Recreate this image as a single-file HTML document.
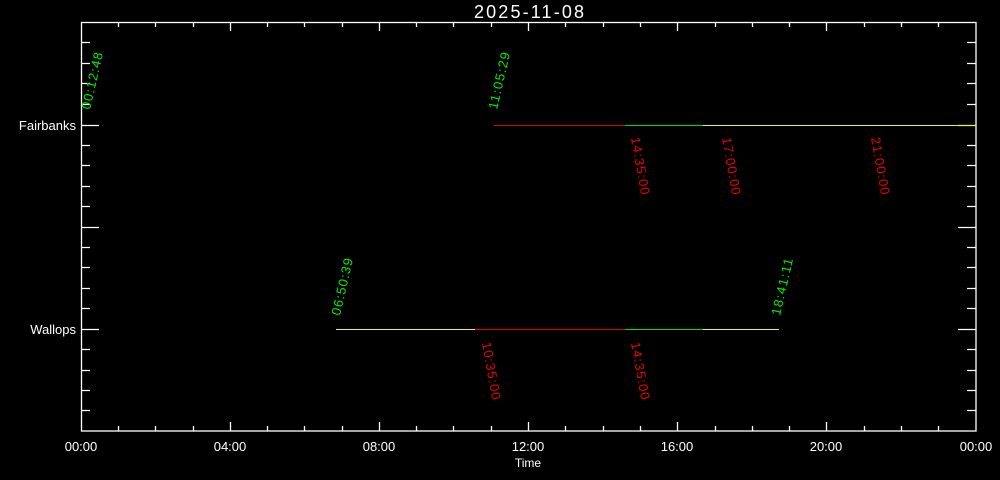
<!DOCTYPE html>
<html><head><meta charset="utf-8"><style>
html,body{margin:0;padding:0;background:#000;width:1000px;height:480px;overflow:hidden}
svg{display:block}
text{font-family:"Liberation Sans",sans-serif}
</style></head><body>
<svg width="1000" height="480" viewBox="0 0 1000 480" xmlns="http://www.w3.org/2000/svg">
<rect width="1000" height="480" fill="#000"/>
<g stroke="#fff" stroke-width="1.3" fill="none">
<rect x="81.5" y="22.5" width="894.5" height="408.5"/>
<path d="M118.5 431V426M155.5 431V426M193.5 431V426M267.5 431V426M304.5 431V426M342.5 431V426M416.5 431V426M453.5 431V426M491.5 431V426M565.5 431V426M603.5 431V426M640.5 431V426M715.5 431V426M752.5 431V426M789.5 431V426M864.5 431V426M901.5 431V426M938.5 431V426
M230.5 431V422M379.5 431V422M528.5 431V422M677.5 431V422M826.5 431V422
M118.5 22V27M155.5 22V27M193.5 22V27M267.5 22V27M304.5 22V27M342.5 22V27M416.5 22V27M453.5 22V27M491.5 22V27M565.5 22V27M603.5 22V27M640.5 22V27M715.5 22V27M752.5 22V27M789.5 22V27M864.5 22V27M901.5 22V27M938.5 22V27
M230.5 22V31M379.5 22V31M528.5 22V31M677.5 22V31M826.5 22V31"/>
<path d="M81 42.5H90M81 63.5H90M81 83.5H90M81 104.5H90M81 145.5H90M81 165.5H90M81 186.5H90M81 206.5H90M81 247.5H90M81 267.5H90M81 288.5H90M81 308.5H90M81 349.5H90M81 370.5H90M81 390.5H90M81 410.5H90
M81 125.5H99M81 227.5H99M81 329.5H99
M976 42.5H967M976 63.5H967M976 83.5H967M976 104.5H967M976 145.5H967M976 165.5H967M976 186.5H967M976 206.5H967M976 247.5H967M976 267.5H967M976 288.5H967M976 308.5H967M976 349.5H967M976 370.5H967M976 390.5H967M976 410.5H967
M976 125.5H958M976 227.5H958M976 329.5H958"/>
</g>
<g stroke-width="1">
<path d="M494 125.5H625" stroke="#d00"/>
<path d="M625 125.5H703" stroke="#0d0"/>
<path d="M703 125.5H976" stroke="#ee4"/>
<path d="M336 329.5H475" stroke="#ee4"/>
<path d="M475 329.5H625" stroke="#d00"/>
<path d="M625 329.5H703" stroke="#0d0"/>
<path d="M703 329.5H779" stroke="#ee4"/>
</g>
<g fill="#fff" font-size="13">
<text x="529" y="18" font-size="18" text-anchor="middle" textLength="110">2025-11-08</text>
<text x="76" y="130" text-anchor="end">Fairbanks</text>
<text x="76" y="334" text-anchor="end">Wallops</text>
<text x="81" y="451" text-anchor="middle">00:00</text>
<text x="230" y="451" text-anchor="middle">04:00</text>
<text x="379" y="451" text-anchor="middle">08:00</text>
<text x="528" y="451" text-anchor="middle">12:00</text>
<text x="677" y="451" text-anchor="middle">16:00</text>
<text x="826" y="451" text-anchor="middle">20:00</text>
<text x="976" y="451" text-anchor="middle">00:00</text>
<text x="528" y="467" text-anchor="middle" font-size="12">Time</text>
</g>
<g font-size="13" fill="#0e0">
<text transform="translate(90,110) rotate(-77)" textLength="58">00:12:48</text>
<text transform="translate(497,110) rotate(-77)" textLength="58">11:05:29</text>
<text transform="translate(340,316) rotate(-77)" textLength="58">06:50:39</text>
<text transform="translate(780,316) rotate(-77)" textLength="58">18:41:11</text>
</g>
<g font-size="13" fill="#e00">
<text transform="translate(631,138) rotate(80)" textLength="58">14:35:00</text>
<text transform="translate(722,138) rotate(80)" textLength="58">17:00:00</text>
<text transform="translate(871,138) rotate(80)" textLength="58">21:00:00</text>
<text transform="translate(482,343) rotate(80)" textLength="58">10:35:00</text>
<text transform="translate(631,343) rotate(80)" textLength="58">14:35:00</text>
</g>
</svg>
</body></html>
